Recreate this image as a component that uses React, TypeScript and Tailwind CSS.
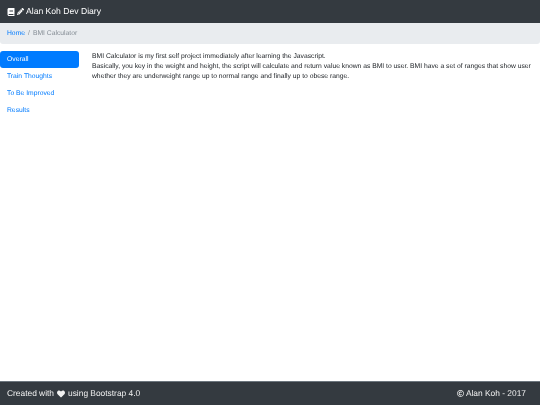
import { FaBook, FaPencilAlt, FaHeart, FaRegCopyright } from "react-icons/fa";

const links = ["Train Thoughts", "To Be Improved", "Results"];

export default function App() {
  return (
    <div className="flex h-screen flex-col bg-white font-['Liberation_Sans',Arial,sans-serif] text-[6.75px] leading-[10.1px] text-[#212529] blur-[0.35px] [text-rendering:geometricPrecision]">
      <header className="flex h-[23px] items-center bg-[#343a40] px-[7px] text-[8.6px] text-white">
        <FaBook className="mr-[2px] h-[8px] w-[8px]" />
        <FaPencilAlt className="mr-[2px] h-[7px] w-[7px]" />
        <span>Alan Koh Dev Diary</span>
      </header>
      <nav className="flex h-[21px] items-center gap-[3px] rounded-b-[3px] bg-[#e9ecef] px-[7px] pt-[1px]">
        <a className="text-[#007bff]">Home</a>
        <span className="text-[#868e96]">/</span>
        <span className="text-[#868e96]">BMI Calculator</span>
      </nav>
      <main className="flex flex-1 pt-[7px]">
        <ul className="w-[79px] shrink-0">
          <li className="flex h-[17px] items-center rounded-[3px] bg-[#007bff] px-[7px] pt-[1px] text-white">Overall</li>
          {links.map((l) => (
            <li key={l} className="flex h-[17px] items-center px-[7px] pt-[1px] text-[#007bff]">
              {l}
            </li>
          ))}
        </ul>
        <div className="ml-[13px] pr-[7px] pt-[1px]">
          <p>BMI Calculator is my first self project immediately after learning the Javascript.</p>
          <p>
            Basically, you key in the weight and height, the script will calculate and return value known as BMI to
            user. BMI have a set of ranges that show user whether they are underweight range up to normal range and
            finally up to obese range.
          </p>
        </div>
      </main>
      <footer className="flex h-[24px] items-center justify-between border-t border-[#6c757d] bg-[#343a40] pl-[7px] pr-[14px] text-[8.4px] text-[#f1f1f1]">
        <span className="flex items-center">
          Created with <FaHeart className="mx-[3px] h-[8px] w-[8px]" /> using Bootstrap 4.0
        </span>
        <span className="flex items-center">
          <FaRegCopyright className="mr-[2px] h-[7px] w-[7px]" /> Alan Koh - 2017
        </span>
      </footer>
    </div>
  );
}
